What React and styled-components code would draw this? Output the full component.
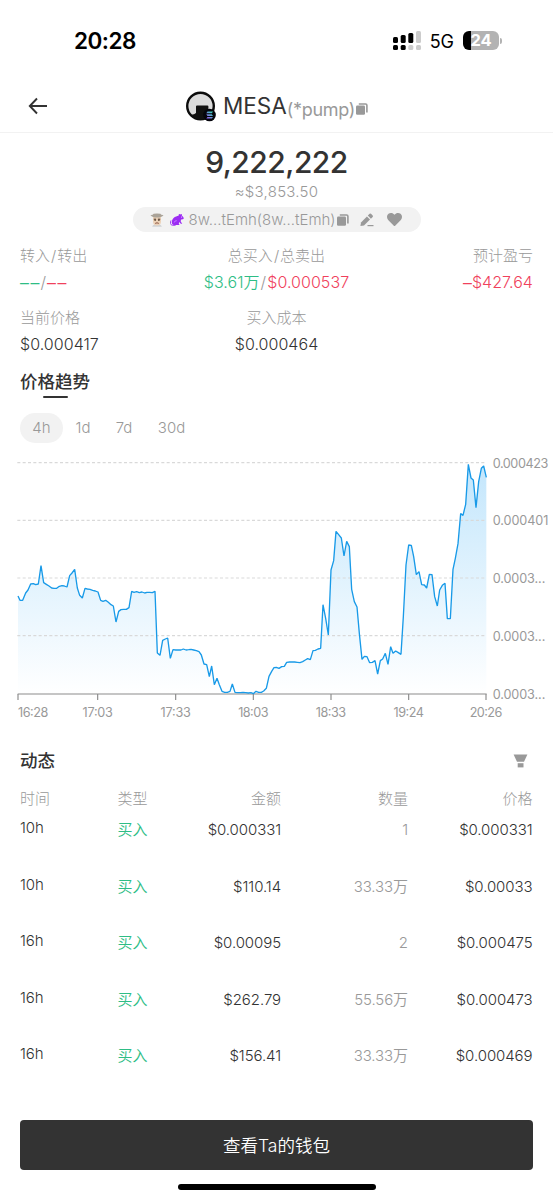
import React from "react";
import styled, { createGlobalStyle } from "styled-components";
import { FaHeart } from "react-icons/fa";

const GlobalStyle = createGlobalStyle`
  * {
    box-sizing: border-box;
  }
  body {
    margin: 0;
    background: #fff;
    font-family: Inter, "Noto Sans CJK SC", sans-serif;
    color: #333;
  }
`;

const Screen = styled.div`
  width: 553px;
  height: 1200px;
  overflow: hidden;
  background: #fff;
  display: flex;
  flex-direction: column;
`;

const StatusBar = styled.div`
  height: 80px;
  padding: 1px 51px 0 74px;
  display: flex;
  align-items: center;
  justify-content: space-between;
  color: #000;
  .time {
    font-size: 22.5px;
    font-weight: 600;
    letter-spacing: -0.5px;
  }
  .right {
    display: flex;
    align-items: center;
  }
  .network {
    font-size: 18px;
    font-weight: 400;
    margin: 2px 9px 0 9px;
    letter-spacing: 0;
  }
`;

const Battery = styled.div`
  width: 36px;
  height: 19px;
  border-radius: 6px;
  background: linear-gradient(to right, #000 8px, #b3b3b3 8px);
  color: #fff;
  font-size: 16.5px;
  font-weight: 700;
  line-height: 19px;
  text-align: center;
  letter-spacing: -0.2px;
`;

const BatteryCap = styled.div`
  width: 2px;
  height: 6px;
  margin-left: 1px;
  border-radius: 0 2px 2px 0;
  background: #b3b3b3;
`;

const Header = styled.div`
  height: 53px;
  border-bottom: 1px solid #f2f2f2;
  display: grid;
  grid-template-columns: 186px 1fr 186px;
  align-items: center;
  .back {
    padding-left: 28px;
    display: flex;
  }
`;

const Token = styled.div`
  display: flex;
  align-items: center;
  white-space: nowrap;
  .name {
    font-size: 22.5px;
    letter-spacing: 0;
    margin: -1px 0 0 6px;
  }
  .suffix {
    font-size: 18px;
    color: #999;
    margin: 6px 1px 0 0;
    letter-spacing: -0.3px;
  }
  .copy {
    margin-top: 6px;
  }
  svg {
    display: block;
  }
`;

const Balance = styled.div`
  height: 101px;
  display: flex;
  flex-direction: column;
  align-items: center;
  .amount {
    margin-top: 10px;
    height: 39px;
    line-height: 38px;
    font-size: 30px;
    font-weight: 450;
    letter-spacing: -0.5px;
  }
  .usd {
    height: 20px;
    line-height: 20px;
    font-size: 15px;
    font-weight: 350;
    color: #999;
    letter-spacing: 0.25px;
  }
`;

const AddressPill = styled.div`
  width: 288px;
  height: 25px;
  margin-top: 5px;
  padding-left: 17px;
  border-radius: 13px;
  background: #f2f2f2;
  display: flex;
  align-items: center;
  gap: 6px;
  font-size: 15px;
  font-weight: 350;
  color: #999;
  .address {
    width: 142px;
    margin-left: -1px;
    white-space: nowrap;
    letter-spacing: 0;
  }
  .edit {
    margin-left: 5px;
    display: flex;
  }
  .heart {
    margin-left: 7px;
  }
`;

const Stats = styled.div`
  height: 128px;
  padding: 8px 20px 0 20px;
  display: grid;
  grid-template-columns: 1fr 1.3fr 1fr;
  grid-auto-rows: 62px;
`;

const Stat = styled.div`
  text-align: ${({ $align }) => $align || "left"};
  .label {
    height: 27px;
    line-height: 27px;
    font-size: 15px;
    font-weight: 300;
    color: #999;
  }
  .value {
    height: 27px;
    line-height: 27px;
    font-size: 16px;
    font-weight: 350;
    white-space: nowrap;
    letter-spacing: 0.05px;
  }
`;

const Tone = styled.span`
  color: ${({ $color }) => $color};
`;

const Slash = styled.span`
  color: #999;
  font-weight: 300;
  padding: 0 1px;
`;

const Dashes = styled(Tone)`
  display: inline-flex;
  gap: 1.5px;
  font-family: "Liberation Sans", sans-serif;
`;

const Title = styled.div`
  font-size: 17.5px;
  font-weight: 500;
  line-height: 26px;
`;

const TrendTitle = styled.div`
  width: 70px;
  margin: 7px 0 0 20px;
  height: 31px;
  display: flex;
  flex-direction: column;
  align-items: center;
  white-space: nowrap;
  &:after {
    content: "";
    width: 25px;
    height: 2.5px;
    margin-top: 0.5px;
    border-radius: 2px;
    background: #333;
    flex: none;
  }
`;

const Tabs = styled.div`
  height: 50px;
  padding: 13px 0 0 20px;
  display: flex;
`;

const Tab = styled.div`
  width: ${({ $width }) => $width}px;
  height: 30px;
  line-height: 30px;
  border-radius: 15px;
  background: ${({ $active }) => ($active ? "#f2f2f2" : "transparent")};
  color: #999;
  font-size: 15px;
  font-weight: 350;
  text-align: center;
`;

const ChartWrapper = styled.div`
  height: 280px;
  svg {
    display: block;
  }
  text {
    font-size: 38px;
    font-weight: 400;
    fill: #999;
  }
`;

const ActivityHead = styled.div`
  height: 55px;
  padding: 7px 25px 0 20px;
  display: flex;
  align-items: center;
  justify-content: space-between;
`;

const Row = styled.div`
  display: grid;
  grid-template-columns: 97.5px 70px 93.5px 127px 124.5px;
  height: ${({ $head }) => ($head ? 29 : 56.5)}px;
  margin-left: 20px;
  line-height: ${({ $head }) => ($head ? 27 : 28)}px;
  font-size: 15px;
  font-weight: ${({ $head }) => ($head ? 300 : 350)};
  color: ${({ $head }) => ($head ? "#999" : "#333")};
  letter-spacing: ${({ $head }) => ($head ? 0 : -0.08)}px;
`;

const Cell = styled.div`
  text-align: ${({ $right }) => ($right ? "right" : "left")};
  color: ${({ $color }) => $color || "inherit"};
  margin-top: ${({ $raised }) => ($raised ? "0" : "2px")};
  white-space: nowrap;
`;

const Table = styled.div`
  height: 335px;
`;

const WalletButton = styled.button`
  flex: none;
  width: 513px;
  height: 50px;
  padding: 0 0 2px;
  margin-left: 20px;
  border: none;
  border-radius: 4px;
  background: #333;
  color: #fff;
  font-family: inherit;
  font-size: 17.5px;
  font-weight: 350;
`;

const HomeBar = styled.div`
  flex: none;
  width: 198px;
  height: 6.5px;
  margin: 13.5px auto 0 178px;
  border-radius: 3px;
  background: #000;
`;

const GREEN = "#2ebd85";
const RED = "#f0415c";

const line =
  "54,438 60,451 68,451 77,429 84,420 92,402 100,401 107,404 115,402 123,347 131,398 139,403 147,408 155,414 162,415 170,415 178,409 186,407 193,408 201,411 209,377 216,369 224,358 232,414 239,436 247,444 255,415 262,417 270,418 278,421 286,423 294,426 302,451 309,454 317,451 325,457 333,464 340,468 348,516 356,484 363,479 371,478 379,478 387,473 395,424 402,427 410,425 418,428 426,426 434,429 441,427 449,427 457,428 465,424 472,609 480,616 488,571 496,567 503,564 511,625 519,599 527,600 535,600 543,600 550,597 558,600 566,599 573,598 581,600 589,602 597,605 604,615 612,642 620,644 628,680 635,648 643,704 651,685 658,704 666,724 674,727 682,727 690,724 697,702 705,727 713,728 721,728 729,727 737,728 745,729 753,728 760,731 768,724 776,727 784,727 791,723 799,715 807,679 815,664 822,653 829,652 837,655 845,650 853,649 860,637 869,636 876,636 884,636 892,637 900,638 908,635 916,630 923,626 931,629 939,602 946,601 954,597 962,595 969,464 977,505 985,555 993,360 1001,332 1008,244 1016,254 1024,264 1032,318 1040,274 1048,290 1055,418 1063,455 1071,471 1078,550 1086,628 1093,619 1101,620 1109,638 1117,637 1125,632 1133,672 1141,632 1148,627 1156,610 1164,643 1172,590 1179,610 1187,603 1195,608 1203,613 1210,500 1218,345 1226,285 1234,286 1241,320 1249,374 1257,365 1265,404 1273,405 1280,414 1288,373 1296,374 1304,440 1312,468 1319,420 1327,406 1335,400 1342,506 1351,506 1359,358 1366,325 1374,281 1382,191 1389,196 1397,163 1405,43 1413,84 1420,90 1428,173 1436,95 1444,55 1451,48 1459,82";

const yTicks = [
  { y: 38, label: "0.000423" },
  { y: 211, label: "0.000401" },
  { y: 384, label: "0.0003..." },
  { y: 557, label: "0.0003..." },
  { y: 732, label: "0.0003..." },
];

const xTicks = [
  { x: 54, label: "16:28", anchor: "start" },
  { x: 293, label: "17:03" },
  { x: 527, label: "17:33" },
  { x: 760, label: "18:03" },
  { x: 993, label: "18:33" },
  { x: 1226, label: "19:24" },
  { x: 1458, label: "20:26" },
];

const rows = [
  ["10h", "$0.000331", "1", "$0.000331"],
  ["10h", "$110.14", "33.33万", "$0.00033"],
  ["16h", "$0.00095", "2", "$0.000475"],
  ["16h", "$262.79", "55.56万", "$0.000473"],
  ["16h", "$156.41", "33.33万", "$0.000469"],
];

const SignalIcon = () => (
  <svg width="28" height="19" viewBox="0 0 28 19">
    <rect x="0" y="6" width="5" height="6" rx="1.5" />
    <rect x="7.7" y="4" width="5" height="8" rx="1.5" />
    <rect x="15.3" y="2" width="5" height="10" rx="1.5" />
    <rect x="23" y="0" width="5" height="12" rx="1.5" fill="#ccc" />
    <rect x="0" y="14" width="5" height="5" rx="1.5" />
    <rect x="7.7" y="14" width="5" height="5" rx="1.5" />
    <rect x="15.3" y="14" width="5" height="5" rx="1.5" fill="#ccc" />
    <rect x="23" y="14" width="5" height="5" rx="1.5" fill="#ccc" />
  </svg>
);

const BackIcon = () => (
  <svg width="20" height="18" viewBox="0 0 20 18" fill="none" stroke="#333" strokeWidth="1.9">
    <path d="M9 1.5L1.8 9L9 16.5M1.8 9H19" />
  </svg>
);

const TokenLogo = () => (
  <svg width="31" height="31" viewBox="0 0 31 31">
    <defs>
      <linearGradient id="sol" x1="0" y1="1" x2="1" y2="0">
        <stop offset="0" stopColor="#a050f5" />
        <stop offset="1" stopColor="#2fe0b5" />
      </linearGradient>
    </defs>
    <circle cx="14.5" cy="15" r="13.3" fill="#dcdcdc" stroke="#0c0c0c" strokeWidth="2.4" />
    <path d="M6 23.5Q8 23.5 10 22V15.6Q10 14.6 11 14.6H21.4Q22.4 14.6 22.4 15.6V26Q18 29 13 28.5Q8 27 6 23.5Z" fill="#111" />
    <circle cx="23.5" cy="24" r="6.3" fill="#05050c" />
    <path
      d="M21.5 20.5H27L25.8 22.2H20.3ZM20.3 23.2H25.8L27 24.9H21.5ZM21.5 25.9H27L25.8 27.6H20.3Z"
      fill="url(#sol)"
    />
  </svg>
);

const CopyIcon = () => (
  <svg width="12" height="12" viewBox="0 0 12 12">
    <rect x="0" y="2.6" width="9" height="9.2" rx="1.2" fill="#999" />
    <path d="M2.8 1H9.6Q10.9 1 10.9 2.3V9.4" fill="none" stroke="#999" strokeWidth="1.6" />
  </svg>
);

const FarmerIcon = () => (
  <svg width="14" height="14" viewBox="0 0 14 14">
    <path d="M2.2 13.8Q3 11 7 11Q11 11 11.8 13.8Z" fill="#cfd3d6" />
    <path d="M3 4H11V8.5Q11 12.6 7 12.6Q3 12.6 3 8.5Z" fill="#ecd2b8" />
    <path d="M.5 2Q3 2.2 3.6 .8Q7 .2 10.4 .8Q11 2.2 13.5 2Q11.6 4.6 7 4.6Q2.4 4.6 .5 2Z" fill="#aaa398" />
    <path d="M3.8 6.2H6.1M7.9 6.2H10.2" stroke="#4b3628" strokeWidth="1" />
    <circle cx="5.1" cy="7.3" r=".7" fill="#43301f" />
    <circle cx="8.9" cy="7.3" r=".7" fill="#43301f" />
    <path d="M5.2 10.4Q7 9.2 8.8 10.4" stroke="#8a5340" strokeWidth="1" fill="none" />
  </svg>
);

const RatIcon = () => (
  <svg width="14" height="13" viewBox="0 0 14 13">
    <path
      d="M6.2 3.6C7 2.9 8 2.7 8.7 2.8C8.2 1.2 9.6 .2 10.5 1.6C11 .6 12.2 .8 11.8 2.5C12.9 3.2 13.8 4.6 13.8 5.3C13.4 6.3 12.2 6.6 11 6.6L10.7 8.4L12.2 10.8H10.8L9.2 9.1L8.8 10.8L9.6 12H3.8C1.9 11.6 1.4 9.8 2 7.8C2.6 5.6 4.2 4 6.2 3.6Z"
      fill="#9c2cf3"
    />
    <path d="M5.6 12.3H2.4C.2 12.2 0 9.2 1 7.4" fill="none" stroke="#9c2cf3" strokeWidth=".9" />
    <circle cx="11.6" cy="4" r=".5" fill="#fff" />
    <path d="M4.2 9.6Q4.6 7.4 6.8 7.7" fill="none" stroke="#d9a6ff" strokeWidth=".6" />
  </svg>
);

const EditIcon = () => (
  <svg width="14" height="14" viewBox="0 0 14 14" fill="#999">
    <path d="M.4 13L1 9.4L6.9 3.5L10 6.6L4 12.5Z" />
    <path d="M7.8 2.6L9.6 .8Q10.3 .2 11 .8L12.7 2.5Q13.3 3.2 12.7 3.9L10.9 5.7Z" />
    <rect x="7.5" y="12" width="6" height="1.2" />
  </svg>
);

const FilterIcon = () => (
  <svg width="15" height="14" viewBox="0 0 15 14" fill="#999">
    <path d="M.6 .5H14.4L11 7.7H4Z" />
    <rect x="4.7" y="9.2" width="5.8" height="4.2" />
  </svg>
);

const PriceChart = () => (
  <ChartWrapper>
    <svg width="553" height="280" viewBox="0 0 1659 840">
      <defs>
        <linearGradient id="area" gradientUnits="userSpaceOnUse" x1="0" y1="40" x2="0" y2="732">
          <stop offset="0" stopColor="#c3e6fc" />
          <stop offset="1" stopColor="#ffffff" />
        </linearGradient>
      </defs>
      <polygon points={`54,732 ${line} 1459,732`} fill="url(#area)" />
      {yTicks.map(({ y, label }) => (
        <g key={y}>
          {y < 700 && (
            <path d={`M52 ${y}H1459`} stroke="#d9d9d9" strokeWidth="3.5" strokeDasharray="9 7" />
          )}
          <text x="1478" y={y + 15} textLength={label === "0.0003..." ? 158 : 167}>
            {label}
          </text>
        </g>
      ))}
      <path d="M53 732H1460" stroke="#8c8c8c" strokeWidth="3.5" />
      {xTicks.map(({ x, label, anchor }) => (
        <g key={x}>
          <path d={`M${x} 732V750`} stroke="#8c8c8c" strokeWidth="3.5" />
          <text
            x={x}
            y="802"
            textAnchor={anchor || "middle"}
            textLength={label === "20:26" ? 98 : 91}
          >
            {label}
          </text>
        </g>
      ))}
      <polyline points={line} fill="none" stroke="#189ae8" strokeWidth="4" strokeLinejoin="bevel" />
    </svg>
  </ChartWrapper>
);

const App = () => {
  return (
    <>
      <GlobalStyle />
      <Screen>
        <StatusBar>
          <div className="time">20:28</div>
          <div className="right">
            <SignalIcon />
            <div className="network">5G</div>
            <Battery>24</Battery>
            <BatteryCap />
          </div>
        </StatusBar>
        <Header>
          <div className="back">
            <BackIcon />
          </div>
          <Token>
            <TokenLogo />
            <div className="name">MESA</div>
            <div className="suffix">(*pump)</div>
            <div className="copy">
              <CopyIcon />
            </div>
          </Token>
        </Header>
        <Balance>
          <div className="amount">9,222,222</div>
          <div className="usd">≈$3,853.50</div>
          <AddressPill>
            <FarmerIcon />
            <RatIcon />
            <span className="address">8w...tEmh(8w...tEmh)</span>
            <CopyIcon />
            <span className="edit">
              <EditIcon />
            </span>
            <FaHeart className="heart" size={15} />
          </AddressPill>
        </Balance>
        <Stats>
          <Stat>
            <div className="label">
              转入<Slash>/</Slash>转出
            </div>
            <div className="value">
              <Dashes $color={GREEN}>
                <span>–</span>
                <span>–</span>
              </Dashes>
              <Slash>/</Slash>
              <Dashes $color={RED}>
                <span>–</span>
                <span>–</span>
              </Dashes>
            </div>
          </Stat>
          <Stat $align="center">
            <div className="label">
              总买入<Slash>/</Slash>总卖出
            </div>
            <div className="value">
              <Tone $color={GREEN}>$3.61万</Tone>
              <Slash>/</Slash>
              <Tone $color={RED}>$0.000537</Tone>
            </div>
          </Stat>
          <Stat $align="right">
            <div className="label">预计盈亏</div>
            <div className="value">
              <Dashes $color={RED}>–</Dashes>
              <Tone $color={RED}>$427.64</Tone>
            </div>
          </Stat>
          <Stat>
            <div className="label">当前价格</div>
            <div className="value">$0.000417</div>
          </Stat>
          <Stat $align="center">
            <div className="label">买入成本</div>
            <div className="value">$0.000464</div>
          </Stat>
        </Stats>
        <TrendTitle>
          <Title>价格趋势</Title>
        </TrendTitle>
        <Tabs>
          <Tab $active $width={43}>4h</Tab>
          <Tab $width={40}>1d</Tab>
          <Tab $width={42}>7d</Tab>
          <Tab $width={53}>30d</Tab>
        </Tabs>
        <PriceChart />
        <ActivityHead>
          <Title>动态</Title>
          <FilterIcon />
        </ActivityHead>
        <Table>
          <Row $head>
            <Cell $raised>时间</Cell>
            <Cell $raised>类型</Cell>
            <Cell $raised $right>金额</Cell>
            <Cell $raised $right>数量</Cell>
            <Cell $raised $right>价格</Cell>
          </Row>
          {rows.map(([time, amount, count, price], i) => (
            <Row key={i}>
              <Cell $raised>{time}</Cell>
              <Cell $color={GREEN}>买入</Cell>
              <Cell $right>{amount}</Cell>
              <Cell $right $color="#999">{count}</Cell>
              <Cell $right>{price}</Cell>
            </Row>
          ))}
        </Table>
        <WalletButton>查看Ta的钱包</WalletButton>
        <HomeBar />
      </Screen>
    </>
  );
};

export default App;
